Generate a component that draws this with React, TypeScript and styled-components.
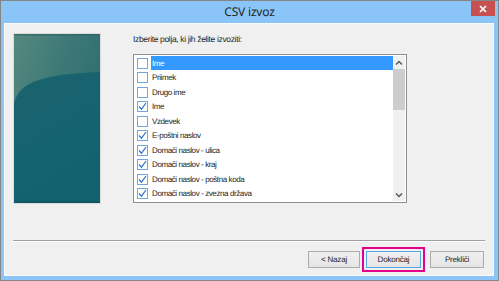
import React from "react";
import styled, { createGlobalStyle } from "styled-components";

const GlobalStyle = createGlobalStyle`
    html, body {
        margin: 0;
        padding: 0;
        background: #ffffff;
    }
    body {
        font-family: "Liberation Sans", Arial, sans-serif;
        text-rendering: geometricPrecision;
    }
`;

type Field = { label: string; checked: boolean; selected?: boolean };

const fields: Field[] = [
    { label: "Ime", checked: false, selected: true },
    { label: "Priimek", checked: false },
    { label: "Drugo ime", checked: false },
    { label: "Ime", checked: true },
    { label: "Vzdevek", checked: false },
    { label: "E-poštni naslov", checked: true },
    { label: "Domači naslov - ulica", checked: true },
    { label: "Domači naslov - kraj", checked: true },
    { label: "Domači naslov - poštna koda", checked: true },
    { label: "Domači naslov - zvezna država", checked: true },
];

const Chevron = ({ down }: { down?: boolean }) => (
    <svg width="8" height="6" viewBox="0 0 8 6">
        <polyline
            points={down ? "1,1.5 4,4.5 7,1.5" : "1,4.5 4,1.5 7,4.5"}
            fill="none"
            stroke="#5a5a5a"
            strokeWidth="1.5"
        />
    </svg>
);

const Banner = () => (
    <BannerBox>
        <svg width="86" height="169" viewBox="0 0 86 169">
            <defs>
                <linearGradient id="upper" x1="0" y1="0" x2="1" y2="0.6">
                    <stop offset="0" stopColor="#55897f" />
                    <stop offset="0.5" stopColor="#3d7876" />
                    <stop offset="1" stopColor="#2b6c70" />
                </linearGradient>
                <linearGradient id="lower" x1="0" y1="0" x2="0.4" y2="1">
                    <stop offset="0" stopColor="#1b636d" />
                    <stop offset="0.6" stopColor="#166370" />
                    <stop offset="1" stopColor="#13606f" />
                </linearGradient>
            </defs>
            <rect width="86" height="169" fill="url(#upper)" />
            <path d="M0,70 C4,50 24,40 86,38 L86,169 L0,169 Z" fill="url(#lower)" />
            <rect width="86" height="1.5" fill="#2d5f5e" opacity="0.6" />
            <rect y="167" width="86" height="2" fill="#0e535c" opacity="0.6" />
        </svg>
    </BannerBox>
);

const App = () => {
    return <Window>
        <GlobalStyle/>
        <TitleBar>
            <Title>CSV izvoz</Title>
            <CloseButton>
                <svg width="8" height="8" viewBox="0 0 8 8">
                    <path d="M1,1 L7,7 M7,1 L1,7" stroke="#ffffff" strokeWidth="1.7" />
                </svg>
            </CloseButton>
        </TitleBar>
        <Client>
            <Main>
                <Banner/>
                <RightCol>
                    <Prompt>Izberite polja, ki jih želite izvoziti:</Prompt>
                    <ListBox>
                        <Items>
                            {fields.map((f, i) => (
                                <Row key={i}>
                                    <Check>
                                        {f.checked && (
                                            <svg width="9" height="9" viewBox="0 0 9 9">
                                                <polyline
                                                    points="1,4.5 3.5,7.2 8,1"
                                                    fill="none"
                                                    stroke="#2f73c9"
                                                    strokeWidth="1.2"
                                                />
                                            </svg>
                                        )}
                                    </Check>
                                    <ItemLabel selected={!!f.selected}>{f.label}</ItemLabel>
                                </Row>
                            ))}
                        </Items>
                        <ScrollBar>
                            <ScrollArrow><Chevron/></ScrollArrow>
                            <Thumb/>
                            <ScrollArrow className="bottom"><Chevron down/></ScrollArrow>
                        </ScrollBar>
                    </ListBox>
                </RightCol>
            </Main>
            <Divider/>
            <ButtonRow>
                <Button w={52} gap={6}>&lt; Nazaj</Button>
                <Button w={55} gap={9} isDefault>Dokončaj</Button>
                <Button w={54} gap={0}>Prekliči</Button>
            </ButtonRow>
        </Client>
    </Window>
}

export default App;

const Window = styled.div`
    width: 499px;
    height: 281px;
    box-sizing: border-box;
    border: 1px solid #858585;
    background: #8bc5f7;
    display: flex;
    flex-direction: column;
`

const TitleBar = styled.div`
    height: 22px;
    display: grid;
    grid-template-columns: 1fr auto 1fr;
    align-items: start;
`

const Title = styled.div`
    grid-column: 2;
    font-family: "Noto Sans", "Liberation Sans", sans-serif;
    font-size: 12px;
    letter-spacing: -0.2px;
    line-height: 22px;
    color: #1e1e1e;
`

const CloseButton = styled.div`
    grid-column: 3;
    justify-self: end;
    margin-right: 3px;
    width: 24px;
    height: 15px;
    background: #c75050;
    display: flex;
    align-items: center;
    justify-content: center;
`

const Client = styled.div`
    flex: 1;
    margin: 0 4px 4px 3px;
    background: #f0f0f0;
    border: 1px solid #fafafa;
    display: flex;
    flex-direction: column;
    padding: 9px 8px 0 8px;
`

const Main = styled.div`
    display: flex;
    align-items: flex-start;
    gap: 32px;
`

const BannerBox = styled.div`
    width: 88px;
    height: 171px;
    box-sizing: border-box;
    border: 1px solid #dadada;
    display: flex;

    & svg {
        display: block;
    }
`

const RightCol = styled.div`
    display: flex;
    flex-direction: column;
`

const Prompt = styled.div`
    margin-top: 1px;
    font-size: 8.5px;
    letter-spacing: -0.35px;
    line-height: 11px;
    color: #1e1e1e;
`

const ListBox = styled.div`
    margin-top: 9px;
    width: 274px;
    height: 149px;
    box-sizing: border-box;
    border: 1px solid #8a8f96;
    background: #ffffff;
    display: flex;
`

const Items = styled.div`
    flex: 1;
    padding-top: 1px;
    display: flex;
    flex-direction: column;
`

const Row = styled.div`
    height: 14.5px;
    display: flex;
    align-items: center;
`

const Check = styled.span`
    margin-left: 3px;
    width: 11px;
    height: 11px;
    box-sizing: border-box;
    border: 1px solid #74a6db;
    background: #ffffff;
    display: flex;
    align-items: center;
    justify-content: center;
`

const ItemLabel = styled.span<{ selected: boolean }>`
    margin-left: 3px;
    flex: 1;
    height: 14px;
    padding-left: 1px;
    display: flex;
    align-items: center;
    font-size: 8px;
    letter-spacing: -0.4px;
    color: ${props => props.selected ? "#ffffff" : "#222222"};
    background: ${props => props.selected ? "#3399ff" : "transparent"};
`

const ScrollBar = styled.div`
    width: 12px;
    margin: 1px 1px 1px 0;
    background: #f0f0f0;
    display: flex;
    flex-direction: column;

    & .bottom {
        margin-top: auto;
    }
`

const ScrollArrow = styled.div`
    height: 13px;
    display: flex;
    align-items: center;
    justify-content: center;
`

const Thumb = styled.div`
    height: 41px;
    background: #cdcdcd;
`

const Divider = styled.div`
    margin-top: 36px;
    border-top: 1px solid #a0a0a0;
    border-bottom: 1px solid #ffffff;
`

const ButtonRow = styled.div`
    margin-top: 9px;
    padding-right: 1px;
    display: flex;
    justify-content: flex-end;
`

const Button = styled.div<{ w: number; gap: number; isDefault?: boolean }>`
    width: ${props => props.w}px;
    height: 17px;
    margin-right: ${props => props.gap}px;
    box-sizing: border-box;
    border: 1px solid ${props => props.isDefault ? "#5aa5e6" : "#acacac"};
    background: linear-gradient(#f0f0f0, #e5e5e5);
    display: flex;
    align-items: center;
    justify-content: center;
    font-size: 8px;
    letter-spacing: -0.2px;
    color: #1e1e1e;
    outline: ${props => props.isDefault ? "2px solid #e3008c" : "none"};
    outline-offset: 2px;
`
